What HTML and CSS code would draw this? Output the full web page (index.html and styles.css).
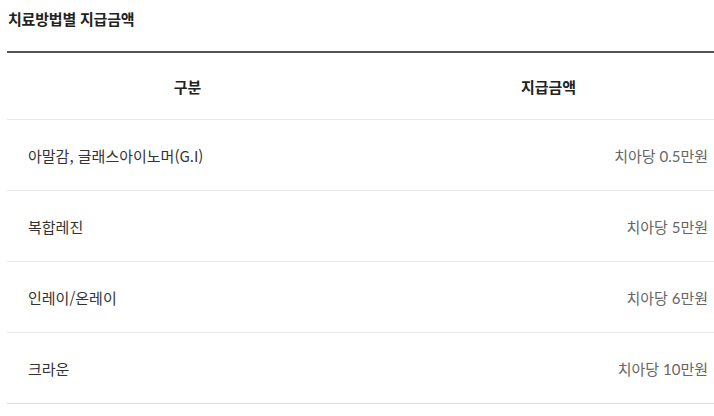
FILE: index.html
```html
<!DOCTYPE html>
<html lang="ko">
<head>
<meta charset="utf-8">
<link rel="stylesheet" href="styles.css">
</head>
<body>
<div class="wrap">
  <h3 class="title">치료방법별 지급금액</h3>
  <table class="pay">
    <colgroup><col class="c1"><col class="c2"></colgroup>
    <thead>
      <tr><th>구분</th><th>지급금액</th></tr>
    </thead>
    <tbody>
      <tr><td class="name">아말감, 글래스아이노머(G.I)</td><td class="amt">치아당 0.5만원</td></tr>
      <tr><td class="name">복합레진</td><td class="amt">치아당 5만원</td></tr>
      <tr><td class="name">인레이/온레이</td><td class="amt">치아당 6만원</td></tr>
      <tr><td class="name">크라운</td><td class="amt">치아당 10만원</td></tr>
    </tbody>
  </table>
</div>
</body>
</html>
```
FILE: styles.css
```css
html, body {
  margin: 0;
  padding: 0;
  background: #fff;
  overflow: hidden;
}
body {
  font-family: Lato, "Noto Sans CJK KR", sans-serif;
  color: #333;
}
.wrap {
  padding: 0 0 0 7px;
  width: 722px;
}
.title {
  margin: 0 0 0 1px;
  padding-top: 8px;
  height: 51px;
  box-sizing: border-box;
  font-size: 15px;
  line-height: 22px;
  font-weight: 700;
  color: #222;
  font-family: "Noto Sans CJK KR", sans-serif;
  letter-spacing: -0.2px;
}
.pay {
  width: 722px;
  border-collapse: collapse;
  border-top: 2px solid #555;
  table-layout: fixed;
}
.c1, .c2 { width: 50%; }
.pay th {
  height: 66px;
  padding: 0;
  font-size: 15px;
  font-weight: 700;
  color: #222;
  text-align: center;
  border-bottom: 1px solid #e8e8e8;
  font-family: "Noto Sans CJK KR", sans-serif;
}
.pay td {
  height: 70px;
  padding: 0 21px;
  font-size: 15px;
  border-bottom: 1px solid #e8e8e8;
}
.pay tbody tr:last-child td {
  border-bottom-color: #dcdcdc;
}
.name {
  color: #333;
  text-align: left;
  font-family: "Noto Sans CJK KR", sans-serif;
}
.amt {
  color: #666;
  text-align: right;
}
```
